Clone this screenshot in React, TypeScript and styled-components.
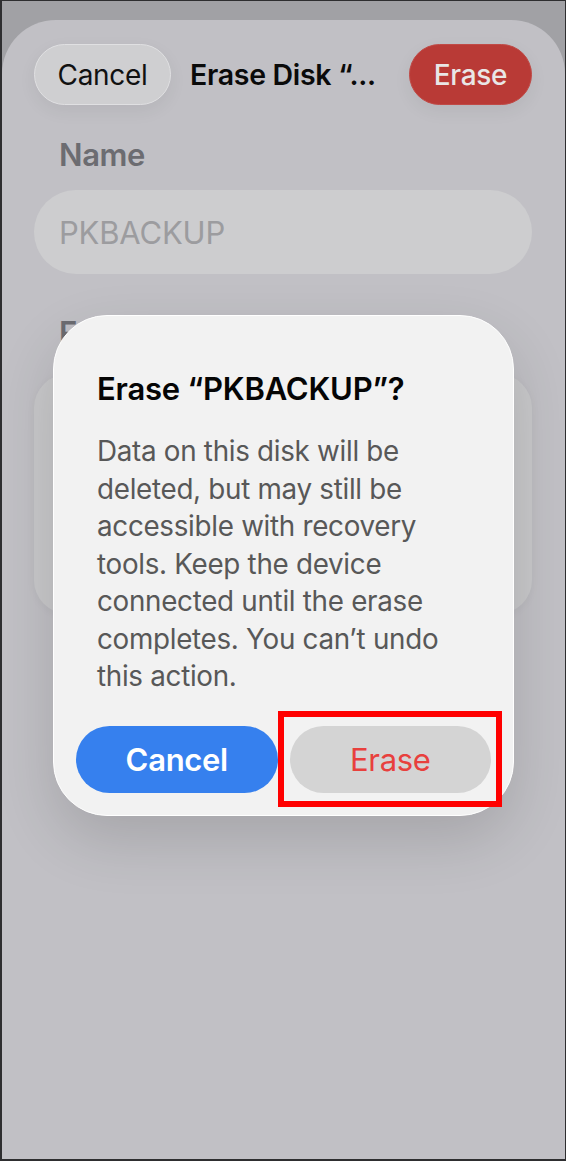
import React from "react";
import styled, { createGlobalStyle } from "styled-components";

const GlobalStyle = createGlobalStyle`
  html, body { margin: 0; padding: 0; background: #a1a1a5; }
  body { font-family: Inter, "Noto Sans", "Liberation Sans", sans-serif; -webkit-font-smoothing: antialiased; }
  * { box-sizing: border-box; }
`;

const Screen = styled.div`
  position: relative;
  width: 566px;
  height: 1161px;
  border: 2px solid #2e2e30;
  border-right-width: 1px;
  border-top-width: 1px;
  background: #a1a1a5;
  display: flex;
  flex-direction: column;
  overflow: hidden;
`;

const Sheet = styled.div`
  margin-top: 19px;
  flex: 1;
  background: #c1c0c5;
  border-radius: 54px 54px 0 0;
  padding: 24px 33px 0 32px;
  display: flex;
  flex-direction: column;
`;

const Header = styled.div`
  display: flex;
  align-items: center;
  justify-content: space-between;
  height: 61px;
`;

const Pill = styled.button<{ $tone: "plain" | "danger" }>`
  flex: none;
  width: ${(p) => (p.$tone === "danger" ? 123 : 137)}px;
  height: 61px;
  padding: 0;
  border-radius: 31px;
  font-family: inherit;
  font-size: 28px;
  letter-spacing: -0.3px;
  font-weight: ${(p) => (p.$tone === "danger" ? 500 : 400)};
  color: ${(p) => (p.$tone === "danger" ? "#e9e6e6" : "#111")};
  background: ${(p) => (p.$tone === "danger" ? "#b93a36" : "#cfcfd1")};
  border: 1.5px solid ${(p) => (p.$tone === "danger" ? "#c04a46" : "#e0e0e2")};
  box-shadow: 0 6px 18px rgba(0, 0, 0, 0.06);
`;

const HeaderTitle = styled.div`
  font-size: 28.5px;
  font-weight: 600;
  letter-spacing: -0.3px;
  color: #0a0a0a;
  flex: 1;
  padding-left: 19px;
  white-space: nowrap;
`;

const SectionLabel = styled.div<{ $top: number }>`
  margin-top: ${(p) => p.$top}px;
  padding-left: 25px;
  font-size: 31px;
  font-weight: 600;
  letter-spacing: -0.4px;
  color: #6c6c71;
  line-height: 32px;
`;

const Field = styled.div`
  margin-top: 19px;
  height: 84px;
  border-radius: 42px;
  background: #cdcdcf;
  display: flex;
  align-items: center;
  padding-left: 25px;
  font-size: 31px;
  letter-spacing: -0.2px;
  color: #9c9c9f;
`;

const Card = styled.div`
  margin-top: 25px;
  height: 240px;
  border-radius: 34px;
  background: #c8c8ca;
  box-shadow: 0 2px 10px rgba(0, 0, 0, 0.04);
`;

const Dialog = styled.div`
  position: absolute;
  left: 51px;
  top: 314px;
  width: 461px;
  padding: 56px 22px 22px 22px;
  background: #f2f2f2;
  border: 1.5px solid #ffffff;
  border-radius: 54px;
  box-shadow: 0 24px 60px rgba(0, 0, 0, 0.14);
`;

const DialogTitle = styled.div`
  padding-left: 21px;
  font-size: 31px;
  line-height: 34px;
  font-weight: 600;
  letter-spacing: -0.2px;
  color: #050505;
  white-space: nowrap;
`;

const DialogBody = styled.p`
  margin: 27px 0 0 0;
  padding-left: 21px;
  font-size: 27.8px;
  line-height: 37.5px;
  letter-spacing: -0.3px;
  color: #585858;
  white-space: nowrap;
`;

const Actions = styled.div`
  margin-top: 30px;
  display: grid;
  grid-template-columns: 1fr 1fr;
  gap: 12px;
`;

const ActionButton = styled.button<{ $primary?: boolean }>`
  position: relative;
  height: 67px;
  border-radius: 34px;
  border: none;
  font-family: inherit;
  font-size: 31px;
  letter-spacing: -0.3px;
  font-weight: ${(p) => (p.$primary ? 600 : 400)};
  color: ${(p) => (p.$primary ? "#ffffff" : "#e8403d")};
  background: ${(p) => (p.$primary ? "#3680ee" : "#d4d4d4")};
`;

const Highlight = styled.span`
  position: absolute;
  left: -12px;
  right: -11px;
  top: -15px;
  bottom: -14px;
  border: 6px solid #ff0000;
  pointer-events: none;
`;

export default function App() {
  return (
    <>
      <GlobalStyle />
      <Screen>
        <Sheet>
          <Header>
            <Pill $tone="plain">Cancel</Pill>
            <HeaderTitle>Erase Disk “...</HeaderTitle>
            <Pill $tone="danger">Erase</Pill>
          </Header>
          <SectionLabel $top={34}>Name</SectionLabel>
          <Field>PKBACKUP</Field>
          <SectionLabel $top={43}>Format</SectionLabel>
          <Card />
        </Sheet>
        <Dialog>
          <DialogTitle>Erase “PKBACKUP”?</DialogTitle>
          <DialogBody>
            Data on this disk will be
            <br />
            deleted, but may still be
            <br />
            accessible with recovery
            <br />
            tools. Keep the device
            <br />
            connected until the erase
            <br />
            completes. You can’t undo
            <br />
            this action.
          </DialogBody>
          <Actions>
            <ActionButton $primary>Cancel</ActionButton>
            <ActionButton>
              Erase
              <Highlight />
            </ActionButton>
          </Actions>
        </Dialog>
      </Screen>
    </>
  );
}
